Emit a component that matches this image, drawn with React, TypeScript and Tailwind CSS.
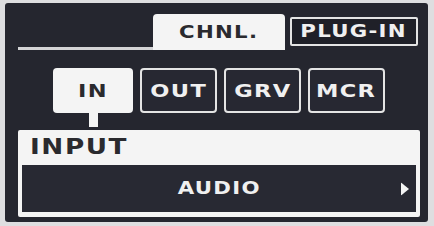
const font = { fontFamily: '"DejaVu Sans", "Liberation Sans", sans-serif' };

// The panel font is an extended face; DejaVu Bold stretched horizontally stands in for it.
function Wide({ children, origin = 'origin-center' }: { children: string; origin?: string }) {
  return <span className={`inline-block scale-x-[1.25] tracking-[0.06em] ${origin}`}>{children}</span>;
}

function ModeButton({ label, active = false }: { label: string; active?: boolean }) {
  return (
    <div
      className={
        active
          ? 'flex h-[45px] w-[80px] items-center justify-center rounded-[4px] bg-[#f4f4f4] text-[18px] font-bold text-[#2a2a2e]'
          : 'flex h-[45px] w-[77px] items-center justify-center rounded-[4px] border-2 border-[#e4e4e4] bg-[#272832] text-[18px] font-bold text-[#f0f0f0]'
      }
    >
      <Wide>{label}</Wide>
    </div>
  );
}

export default function App() {
  return (
    <div className="h-[226px] w-[434px] bg-[#dedee0] pt-[3px] pr-[6px] pb-[4px] pl-[5px]" style={font}>
      <div className="flex h-full w-full flex-col rounded-[3px] bg-[#25262f]">
        {/* tab row */}
        <div className="mt-[11px] flex h-[36px] pr-[10px] pl-[13px]">
          <div className="h-[3px] flex-1 self-end bg-[#d4d4d6]" />
          <div className="flex w-[132px] items-center justify-center rounded-t-[4px] bg-[#f4f4f4] pt-[1px] text-[17px] font-bold text-[#2a2a2e]">
            <Wide>CHNL.</Wide>
          </div>
          <div className="mt-[3px] ml-[5px] flex h-[29px] w-[128px] items-center justify-center rounded-[2px] border-2 border-[#e4e4e4] bg-[#1f2028] text-[17px] font-bold text-[#f0f0f0]">
            <Wide>PLUG-IN</Wide>
          </div>
        </div>

        {/* mode buttons */}
        <div className="mt-[18px] flex items-start gap-[7px] pl-[48px]">
          <div className="flex flex-col items-center">
            <ModeButton label="IN" active />
            <div className="h-[14px] w-[9px] bg-[#f4f4f4]" />
          </div>
          <ModeButton label="OUT" />
          <ModeButton label="GRV" />
          <ModeButton label="MCR" />
        </div>

        {/* input panel */}
        <div className="mt-[3px] mr-[8px] ml-[13px] flex h-[87px] flex-col rounded-[2px] bg-[#f4f4f4] px-[4px] pb-[5px]">
          <div className="flex h-[35px] items-center pl-[8px] text-[21px] font-bold text-[#2a2a2e]">
            <Wide origin="origin-left">INPUT</Wide>
          </div>
          <div className="relative flex flex-1 items-center justify-center bg-[#282933] text-[17px] font-bold text-[#f0f0f0]">
            <Wide>AUDIO</Wide>
            <svg className="absolute top-1/2 right-[7px] -translate-y-1/2" width="8" height="13" viewBox="0 0 8 13">
              <path d="M0 0 L8 6.5 L0 13 Z" fill="#f4f4f4" />
            </svg>
          </div>
        </div>
      </div>
    </div>
  );
}
